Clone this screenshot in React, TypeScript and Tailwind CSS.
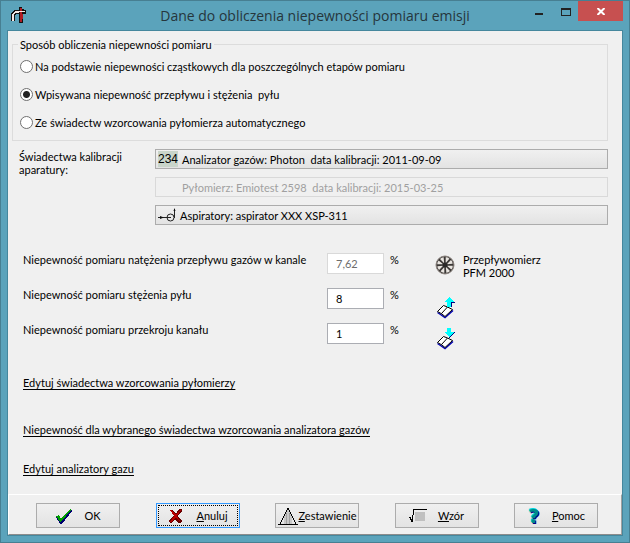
import { useState } from 'react';
import type { ReactNode } from 'react';

const methods = [
  'Na podstawie niepewności cząstkowych dla poszczególnych etapów pomiaru',
  'Wpisywana niepewność przepływu i stężenia \u00a0pyłu',
  'Ze świadectw wzorcowania pyłomierza automatycznego',
];

const values = [
  { id: 'flow', label: 'Niepewność pomiaru natężenia przepływu gazów w kanale', value: '7,62', disabled: true },
  { id: 'dust', label: 'Niepewność pomiaru stężenia pyłu', value: '8', disabled: false },
  { id: 'section', label: 'Niepewność pomiaru przekroju kanału', value: '1', disabled: false },
];

function AppIcon() {
  return (
    <svg width="16" height="17" viewBox="0 0 16 17" shapeRendering="crispEdges">
      <path d="M8 0h3v2h2v5h-1v9H8z" fill="#111" />
      <path d="M9 1h2v14H9z M11 7h1v5h-1z" fill="#b01c24" />
      <path d="M0 14V7l1-2 2-2h12v4H5L4 9v5z" fill="#111" />
      <path d="M1 14V8l3-4h4v2H4L3 8v6z" fill="#f4e9e6" />
      <path d="M8 4h6v1H8z" fill="#f4e9e6" />
      <path d="M9 2h2v2H9z M9 5h2v2H9z" fill="#b01c24" />
    </svg>
  );
}

function PumpIcon() {
  return (
    <svg width="18" height="16" viewBox="0 0 18 16" fill="none" stroke="#222">
      <circle cx="12.5" cy="10.5" r="3.5" />
      <path d="M0 10.5h13M16.5 2v9" />
      <path d="M2 9l4 1.500-4 1.500zM15.500 4l1-3 1 3z" fill="#111" stroke="none" />
    </svg>
  );
}

function FanIcon() {
  return (
    <svg width="20" height="20" viewBox="0 0 20 20">
      <circle cx="10" cy="10" r="9" fill="#3b3836" stroke="#8d8580" strokeWidth="1" />
      {[0, 45, 90, 135, 180, 225, 270, 315].map((angle) => (
        <path key={angle} d="M10 8L8 2.500Q10 1.500 12 2.500z" fill="#e9e5e0" transform={`rotate(${angle + 20} 10 10)`} />
      ))}
      <circle cx="10" cy="10" r="2.500" fill="#2b2928" />
    </svg>
  );
}

function BookIcon({ up }: { up: boolean }) {
  return (
    <svg width="19" height="22" viewBox="0 0 19 22">
      <path d="M1.500 15.500l3 2 4.500 3 8-7" fill="none" stroke="#0000b0" strokeWidth="1.500" />
      <path d="M1.500 14.500l6-6 4 1.500 5 2.500-7.500 7-3-2.500z" fill="#fff" stroke="#000" />
      <path d="M11.500 10l-6 6.500" fill="none" stroke="#000" />
      {up ? (
        <g shapeRendering="crispEdges">
          <path d="M14 1l5 5h-3v4h-2z" fill="#000080" />
          <path d="M13 0l5 5h-3v5h-4V5H8z" fill="#00ffff" />
        </g>
      ) : (
        <g shapeRendering="crispEdges">
          <path d="M14 4h5l-6 6z" fill="#000080" />
          <path d="M11 0h4v4h3l-5 5-5-5h3z" fill="#00ffff" />
        </g>
      )}
    </svg>
  );
}

function CheckIcon() {
  return (
    <svg width="18" height="16" viewBox="0 0 18 16" shapeRendering="crispEdges">
      <path d="M1 9l3-1 2 3L16 1l1 2L7 16H5z" fill="#000070" />
      <path d="M1 8l3-1 2 4L15 1l1 1L6 14H5z" fill="#00a000" />
    </svg>
  );
}

function CrossIcon() {
  return (
    <svg width="18" height="16" viewBox="0 0 18 16" shapeRendering="crispEdges">
      <path d="M3 2h3l3 4 3-5h3v2l-4 5 4 5-2 2h-2l-3-4-3 4H3l-1-2 5-6-4-4z" fill="#680000" />
      <path d="M3 2h2l4 5 4-5h1l-4 6 3 5h-1l-3-4-4 5H3l4-6z" fill="#b80000" />
    </svg>
  );
}

function BellIcon() {
  return (
    <svg width="20" height="18" viewBox="0 0 20 18" shapeRendering="crispEdges">
      <path d="M6 8l4-6 4 6v9H6z" fill="#c8c8c8" />
      <path d="M8.500 6v11M11.500 6v11" stroke="#a0a0a0" />
      <path d="M2 17L10 1l8 16M0 17.500h20" fill="none" stroke="#000" />
    </svg>
  );
}

function RootIcon() {
  return (
    <svg width="18" height="16" viewBox="0 0 18 16" shapeRendering="crispEdges">
      <path d="M6 4h10v9H6z" fill="#c0c0c0" />
      <path d="M5 1.500h13M4.500 1v6M3.500 7v7M2.500 11v3M1.500 9v3M0 9.500h2" fill="none" stroke="#000" />
    </svg>
  );
}

function DeviceButton({ icon, disabled, children }: { icon?: ReactNode; disabled?: boolean; children: ReactNode }) {
  return (
    <button
      type="button"
      disabled={disabled}
      className="flex h-5 items-center gap-1 border border-[#acacac] bg-linear-to-b from-[#f0f0f0] to-[#e3e3e3] px-[2px] text-left whitespace-pre disabled:border-[#d9d9d9] disabled:bg-none disabled:text-[#a0a0a0]"
    >
      {icon ?? <span className="w-5" />}
      <span>{children}</span>
    </button>
  );
}

function ActionButton({ icon, focused, tight, children }: { icon: ReactNode; focused?: boolean; tight?: boolean; children: ReactNode }) {
  return (
    <button
      type="button"
      className={`relative flex h-[25px] w-[84px] items-center justify-center border bg-linear-to-b from-[#f0f0f0] to-[#e3e3e3] ${
        tight ? 'gap-px' : 'gap-[11px]'
      } ${focused ? 'border-[#3399ff]' : 'border-[#acacac]'}`}
    >
      {focused && <span className="absolute inset-px border border-dotted border-black" />}
      {icon}
      <span>{children}</span>
    </button>
  );
}

export default function App() {
  const [method, setMethod] = useState(1);

  return (
    <div className="flex min-h-screen flex-col border border-[#477f92] bg-[#5ba3bb] px-[6px] pb-[6px] font-['Lato',sans-serif] text-[11px] leading-[13px] text-black">
      <header className="flex h-[29px] items-start">
        <div className="w-[89px] pt-[6px] pl-1">
          <AppIcon />
        </div>
        <h1 className="flex-1 pt-[3px] text-center font-['Open_Sans',sans-serif] text-[14px] leading-[24px] whitespace-nowrap text-[#26363c]">
          Dane do obliczenia niepewności pomiaru emisji
        </h1>
        <div className="flex">
          <button type="button" aria-label="Minimalizuj" className="flex h-5 w-[27px] items-end pb-[6px] pl-[1px]">
            <span className="h-[2px] w-2 bg-[#222]" />
          </button>
          <button type="button" aria-label="Maksymalizuj" className="flex h-5 w-[17px] items-center pt-[2px]">
            <span className="h-2 w-[10px] border border-t-2 border-[#222]" />
          </button>
          <button type="button" aria-label="Zamknij" className="flex h-5 w-[45px] items-center justify-center bg-[#c75050]">
            <svg width="8" height="7" viewBox="0 0 8 7" stroke="#fff" strokeWidth="2">
              <path d="M0.500 0l7 7M7.500 0l-7 7" />
            </svg>
          </button>
        </div>
      </header>

      <div className="flex flex-1 flex-col border border-[#45879d] bg-[#f0f0f0]">
        <main className="flex-1 pt-[7px] pr-[14px] pl-1">
          <fieldset className="border border-[#dcdcdc] px-[7px] pb-1">
            <legend className="-ml-[2px] px-[2px]">Sposób obliczenia niepewności pomiaru</legend>
            <div className="pt-px">
              {methods.map((text, i) => (
                <label key={text} className="flex h-7 items-center gap-[2px]">
                  <input
                    type="radio"
                    name="method"
                    checked={method === i}
                    onChange={() => setMethod(i)}
                    className="size-[13px] appearance-none rounded-full border border-[#707070] bg-white checked:bg-[radial-gradient(circle,#222_3px,#fff_4px)]"
                  />
                  <span>{text}</span>
                </label>
              ))}
            </div>
          </fieldset>

          <section className="mt-2 flex pl-[7px]">
            <p className="w-[136px] pt-px">
              Świadectwa kalibracji
              <br />
              aparatury:
            </p>
            <div className="flex flex-1 flex-col gap-2">
              <DeviceButton
                icon={
                  <span className="h-4 w-5 bg-[#c9d5ca] text-center font-['Liberation_Sans',sans-serif] text-[12px] leading-4">
                    234
                  </span>
                }
              >
                {'Analizator gazów: Photon  data kalibracji: 2011-09-09'}
              </DeviceButton>
              <DeviceButton disabled>{'Pyłomierz: Emiotest 2598  data kalibracji: 2015-03-25'}</DeviceButton>
              <DeviceButton icon={<PumpIcon />}>Aspiratory: aspirator XXX XSP-311</DeviceButton>
            </div>
          </section>

          <section className="mt-7 flex pl-[11px]">
            <div className="flex w-[412px] flex-col gap-[14px]">
              {values.map((row) => (
                <div key={row.id} className="flex h-[21px] items-start">
                  <label htmlFor={row.id} className="w-[304px]">
                    {row.label}
                  </label>
                  <input
                    id={row.id}
                    defaultValue={row.value}
                    disabled={row.disabled}
                    className="h-[21px] w-[57px] border border-[#abadb3] bg-white px-2 disabled:border-[#d9d9d9] disabled:text-[#6d6d6d]"
                  />
                  <span className="pl-[6px]">%</span>
                </div>
              ))}
            </div>
            <div className="flex flex-col">
              <div className="flex h-[44px] items-start gap-2">
                <div className="pt-[2px]">
                  <FanIcon />
                </div>
                <p>
                  Przepływomierz
                  <br />
                  PFM 2000
                </p>
              </div>
              <button type="button" aria-label="Wczytaj z książki" className="flex h-[31px] items-start pl-px">
                <BookIcon up />
              </button>
              <button type="button" aria-label="Zapisz do książki" className="flex items-start pl-px">
                <BookIcon up={false} />
              </button>
            </div>
          </section>

          <nav className="mt-[26px] flex flex-col items-start pl-[11px] underline underline-offset-2">
            <a href="#pylomierze">Edytuj świadectwa wzorcowania pyłomierzy</a>
            <a href="#niepewnosc" className="mt-[34px]">
              Niepewność dla wybranego świadectwa wzorcowania analizatora gazów
            </a>
            <a href="#analizatory" className="mt-[26px]">
              Edytuj analizatory gazu
            </a>
          </nav>
        </main>

        <footer className="flex justify-between border border-t-white border-r-[#a0a0a0] border-b-[#8c8c8c] border-l-white pt-2 pr-[23px] pb-[6px] pl-[27px]">
          <ActionButton icon={<CheckIcon />}>OK</ActionButton>
          <ActionButton icon={<CrossIcon />} focused>
            <u>A</u>nuluj
          </ActionButton>
          <ActionButton icon={<BellIcon />} tight>
            <u>Z</u>estawienie
          </ActionButton>
          <ActionButton icon={<RootIcon />}>
            <u>W</u>zór
          </ActionButton>
          <ActionButton
            icon={
              <span className="w-[14px] text-center font-['DejaVu_Sans',sans-serif] text-[19px] leading-5 font-bold text-[#008b8b] [text-shadow:1px_1px_0_#000080,-1px_-1px_0_#00d8e0]">?</span>
            }
          >
            <u>P</u>omoc
          </ActionButton>
        </footer>
      </div>
    </div>
  );
}
